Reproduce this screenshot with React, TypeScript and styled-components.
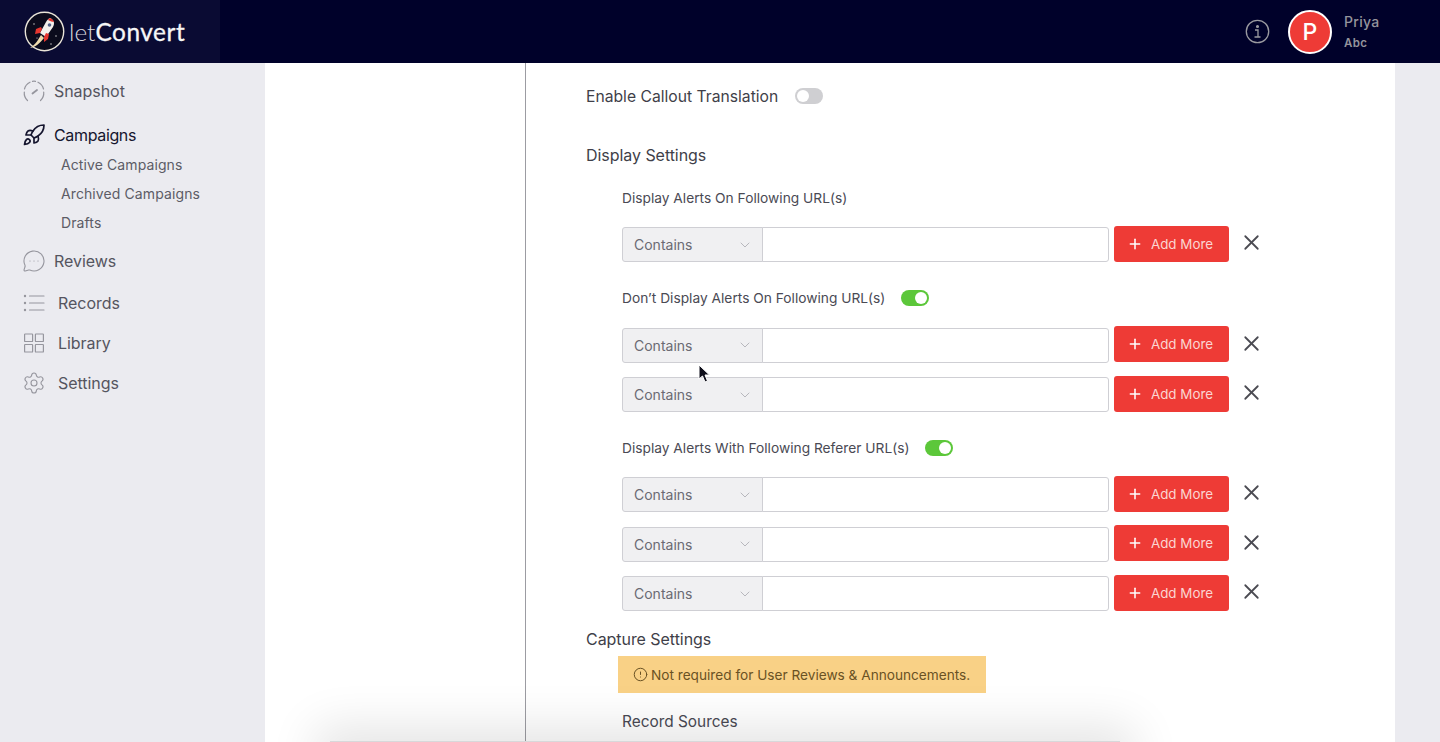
import React from "react";
import styled, { createGlobalStyle } from "styled-components";
import { Rocket, MessageCircleMore, Settings, X, Plus, ChevronDown, CircleAlert } from "lucide-react";

const Global = createGlobalStyle`
  html, body { margin: 0; padding: 0; height: 742px; overflow: hidden; background: #ebebf0; }
  body { font-family: Inter, "Liberation Sans", sans-serif; color: #3f3f49; }
  * { box-sizing: border-box; }
`;

const Page = styled.div`
  position: relative;
  width: 1440px;
  height: 742px;
  overflow: hidden;
  display: flex;
  flex-direction: column;
`;

const Header = styled.header`
  height: 63px;
  flex: none;
  background: #00012a;
  display: flex;
  align-items: center;
  justify-content: space-between;
`;

const Brand = styled.div`
  width: 220px;
  height: 100%;
  background: #0a0b33;
  display: flex;
  align-items: center;
  padding-left: 24px;
  gap: 4px;
`;

const Wordmark = styled.div`
  font-family: Lato, sans-serif;
  font-size: 24.4px;
  color: #d9d9dc;
  font-weight: 300;
  b { font-weight: 400; color: #f6f6f6; letter-spacing: 0.55px; -webkit-text-stroke: 0.3px #f6f6f6; }
`;

const HeaderRight = styled.div`
  display: flex;
  align-items: center;
  padding-right: 60px;
`;

const Avatar = styled.div`
  width: 44px;
  height: 44px;
  margin-left: 18px;
  border-radius: 50%;
  background: #ee3b36;
  border: 2px solid #fff;
  color: #fff;
  font-size: 23px;
  font-weight: 500;
  display: flex;
  align-items: center;
  justify-content: center;
`;

const UserInfo = styled.div`
  margin-left: 12px;
  width: 36px;
  color: #94949c;
  display: flex;
  flex-direction: column;
  gap: 6px;
`;

const UserName = styled.span`
  font-size: 14px;
  line-height: 16px;
  font-weight: 500;
  letter-spacing: 0.3px;
`;

const UserOrg = styled.span`
  font-size: 11.5px;
  line-height: 14px;
  font-weight: 600;
  letter-spacing: 0.4px;
`;

const Body = styled.div`
  flex: 1;
  display: flex;
  min-height: 0;
`;

const Sidebar = styled.nav`
  width: 265px;
  flex: none;
  background: #ebebf0;
  padding: 8px 0 0 24px;
`;

const NavItem = styled.div<{ $top?: number; $textGap?: number; $active?: boolean }>`
  height: 40px;
  margin-top: ${p => p.$top ?? 0}px;
  display: flex;
  align-items: center;
  gap: ${p => p.$textGap ?? 10}px;
  font-size: 16px;
  letter-spacing: ${p => (p.$active ? "-0.35px" : "-0.05px")};
  color: ${p => (p.$active ? "#15152e" : "#55555f")};
  svg {
    width: 24px;
    height: 24px;
    margin: 0 -2px;
    flex: none;
    color: ${p => (p.$active ? "#15152e" : "#96969e")};
  }
`;

const SubList = styled.div`
  margin-top: -5px;
  margin-bottom: 4px;
  padding-left: 37px;
`;

const SubItem = styled.div`
  height: 29px;
  line-height: 29px;
  font-size: 14px;
  color: #5c5c66;
  letter-spacing: 0.1px;
`;

const Main = styled.main`
  width: 1130px;
  flex: none;
  background: #fff;
  padding-left: 260px;
`;

const Column = styled.div`
  height: 100%;
  border-left: 1px solid #9c9ca2;
  padding: 21px 0 0 60px;
`;

const ToggleLine = styled.div`
  display: flex;
  align-items: center;
  gap: 17px;
  height: 24px;
  font-size: 15.7px;
  color: #3f3f49;
`;

const Switch = styled.span<{ $on?: boolean }>`
  width: 28px;
  height: 16px;
  border-radius: 8px;
  background: ${p => (p.$on ? "#5cc73a" : "#cfcfd2")};
  position: relative;
  display: inline-block;
  &::after {
    content: "";
    position: absolute;
    top: 2px;
    left: ${p => (p.$on ? "14px" : "2px")};
    width: 12px;
    height: 12px;
    border-radius: 50%;
    background: #fff;
  }
`;

const SectionTitle = styled.h3<{ $top: number }>`
  margin: ${p => p.$top}px 0 0;
  height: 24px;
  line-height: 24px;
  font-size: 16px;
  font-weight: 400;
  letter-spacing: -0.05px;
  color: #3f3f49;
`;

const Indented = styled.div`
  padding-left: 36px;
`;

const FieldLabel = styled.div<{ $top: number }>`
  margin-top: ${p => p.$top}px;
  height: 24px;
  display: flex;
  align-items: center;
  gap: 16px;
  font-size: 13.75px;
  color: #4a4a54;
`;

const UrlRow = styled.div<{ $top: number }>`
  margin-top: ${p => p.$top}px;
  height: 36px;
  display: flex;
  align-items: flex-start;
`;

const SelectBox = styled.div`
  width: 141px;
  height: 35px;
  flex: none;
  background: #f0f0f2;
  border: 1px solid #cfcfd4;
  border-radius: 3px 0 0 3px;
  display: flex;
  align-items: center;
  justify-content: space-between;
  padding: 0 9px 0 11px;
  font-size: 14px;
  color: #6a6a73;
  svg { width: 16px; height: 16px; color: #a8a8ae; stroke-width: 1.2; }
`;

const UrlInput = styled.div`
  width: 347px;
  height: 35px;
  flex: none;
  margin-left: -1px;
  background: #fff;
  border: 1px solid #cfcfd4;
  border-radius: 0 3px 3px 0;
`;

const AddButton = styled.button`
  width: 115px;
  height: 36px;
  margin: -1.3px 0 0 5px;
  flex: none;
  border: 0;
  border-radius: 3px;
  background: #ee3b36;
  display: flex;
  align-items: center;
  justify-content: center;
  gap: 8px;
  font-family: inherit;
  font-size: 13.4px;
  color: #fbd5d2;
  padding: 0 3px 0 0;
  svg { width: 16px; height: 16px; color: #fff; stroke-width: 2.3; }
`;

const RemoveIcon = styled.span`
  margin: -2.2px 0 0 10px;
  height: 36px;
  display: flex;
  align-items: center;
  color: #4a4a52;
  svg { width: 25px; height: 25px; stroke-width: 1.7; }
`;

const Notice = styled.div`
  margin: 5px 0 0 32px;
  width: 368px;
  height: 37px;
  background: #f9d186;
  display: flex;
  align-items: center;
  gap: 3px;
  padding-left: 15px;
  font-size: 13.65px;
  color: #6a5224;
  svg { width: 15px; height: 15px; flex: none; stroke-width: 1.6; }
`;

const SubTitle = styled.div`
  margin: 17px 0 0 36px;
  height: 24px;
  line-height: 24px;
  font-size: 15.4px;
  color: #4a4a54;
`;

const Gutter = styled.div`
  flex: 1;
  background: #ebebf0;
`;

const BottomCard = styled.div`
  position: absolute;
  left: 330px;
  top: 741px;
  width: 790px;
  height: 30px;
  background: #d8d8da;
  box-shadow: 0 0 48px 14px rgba(0, 0, 0, 0.11);
`;

const Pointer = styled.svg`
  position: absolute;
  left: 698px;
  top: 364px;
  width: 12px;
  height: 19px;
`;

const Logo = () => (
  <svg width="41" height="41" viewBox="0 0 41 41" fill="none">
    <circle cx="20.5" cy="20.5" r="19.2" fill="#0b0b1c" stroke="#e9e4d8" strokeWidth="1.4" />
    <path d="M6 37C12 33 14 29 17 24l3 3c-4 5-8 9-14 10Z" fill="#f0dcae" />
    <path d="M26 7c4 2 5 5 3 9l-7 10-6-4 6-11c1-2 2-3 4-4Z" fill="#f4f1ec" />
    <path d="M26 7c2 1 3.500 2 4 4-1.500 0-4-1-6-2 .5-1 1-1.500 2-2Z" fill="#e6362f" />
    <path d="M17 16l-5 2-1 5 5-1 2-4ZM25 23l-1 5-4 3 0-5 2-4Z" fill="#e6362f" />
    <circle cx="25.500" cy="14" r="1.800" fill="#54648a" />
    <circle cx="10" cy="13" r=".7" fill="#ddd" />
    <circle cx="32" cy="25" r=".7" fill="#ddd" />
    <circle cx="27" cy="33" r=".7" fill="#ddd" />
    <circle cx="13" cy="27" r=".6" fill="#ddd" />
  </svg>
);

const InfoGlyph = () => (
  <svg width="25" height="25" viewBox="0 0 25 25" fill="none" stroke="#9a9aa0" strokeWidth="1.300">
    <circle cx="12.500" cy="12.500" r="11.200" />
    <path d="M10 11h3v7M9.500 18h6" />
    <circle cx="12.500" cy="7.500" r=".9" fill="#9a9aa0" />
  </svg>
);

const SnapshotIcon = () => (
  <svg viewBox="0 0 24 24" fill="none" stroke="currentColor" strokeWidth="1.2" strokeLinecap="round">
    <path d="M5.500 21.500A10.200 10.200 0 0 1 2.300 13M2.500 10A10 10 0 0 1 8 3.200M10.500 2.300a10 10 0 0 1 3 0M16 3.200A10 10 0 0 1 21.500 10M21.700 13a10.200 10.200 0 0 1-3.200 8.500" />
    <path d="M10.500 14.500l4.500-3.500" strokeWidth="1.800" />
  </svg>
);

const RecordsIcon = () => (
  <svg viewBox="0 0 24 24" fill="none" stroke="currentColor" strokeWidth="1.2" strokeLinecap="round">
    <path d="M7.500 5h14.500M7.500 12h14.500M7.500 19h14.500" />
    <path d="M3 5h.01M3 12h.01M3 19h.01" strokeWidth="2.400" />
  </svg>
);

const LibraryIcon = () => (
  <svg viewBox="0 0 24 24" fill="none" stroke="currentColor" strokeWidth="1.2">
    <rect x="2.600" y="3" width="8" height="7.500" rx=".6" />
    <rect x="13.400" y="3" width="8" height="7.500" rx=".6" />
    <rect x="2.600" y="13.500" width="8" height="7.500" rx=".6" />
    <rect x="13.400" y="13.500" width="8" height="7.500" rx=".6" />
  </svg>
);

const Row = ({ top }: { top: number }) => (
  <UrlRow $top={top}>
    <SelectBox>
      Contains
      <ChevronDown />
    </SelectBox>
    <UrlInput />
    <AddButton>
      <Plus />
      Add More
    </AddButton>
    <RemoveIcon>
      <X />
    </RemoveIcon>
  </UrlRow>
);

export default function App() {
  return (
    <Page>
      <Global />
      <Header>
        <Brand>
          <Logo />
          <Wordmark>
            let<b>Convert</b>
          </Wordmark>
        </Brand>
        <HeaderRight>
          <InfoGlyph />
          <Avatar>P</Avatar>
          <UserInfo>
            <UserName>Priya</UserName>
            <UserOrg>Abc</UserOrg>
          </UserInfo>
        </HeaderRight>
      </Header>
      <Body>
        <Sidebar>
          <NavItem><SnapshotIcon />Snapshot</NavItem>
          <NavItem $top={4} $active><Rocket strokeWidth={1.7} />Campaigns</NavItem>
          <SubList>
            <SubItem>Active Campaigns</SubItem>
            <SubItem>Archived Campaigns</SubItem>
            <SubItem>Drafts</SubItem>
          </SubList>
          <NavItem $top={1}><MessageCircleMore strokeWidth={1.1} />Reviews</NavItem>
          <NavItem $top={2} $textGap={14}><RecordsIcon />Records</NavItem>
          <NavItem $textGap={14}><LibraryIcon />Library</NavItem>
          <NavItem $textGap={14}><Settings strokeWidth={1.1} />Settings</NavItem>
        </Sidebar>
        <Main>
          <Column>
            <ToggleLine>
              Enable Callout Translation
              <Switch />
            </ToggleLine>
            <SectionTitle $top={35}>Display Settings</SectionTitle>
            <Indented>
              <FieldLabel $top={18.5}>Display Alerts On Following URL(s)</FieldLabel>
              <Row top={17.5} />
              <FieldLabel $top={23}>
                Don’t Display Alerts On Following URL(s)
                <Switch $on />
              </FieldLabel>
              <Row top={17.5} />
              <Row top={13.5} />
              <FieldLabel $top={22.5}>
                Display Alerts With Following Referer URL(s)
                <Switch $on />
              </FieldLabel>
              <Row top={17.5} />
              <Row top={13.5} />
              <Row top={13.5} />
            </Indented>
            <SectionTitle $top={15}>Capture Settings</SectionTitle>
            <Notice>
              <CircleAlert />
              Not required for User Reviews &amp; Announcements.
            </Notice>
            <SubTitle>Record Sources</SubTitle>
          </Column>
        </Main>
        <Gutter />
      </Body>
      <BottomCard />
      <Pointer viewBox="0 0 12 19">
        <path d="M1 1v14l3.500-3 2.500 6 2.500-1-2.500-6h4.500Z" fill="#10101c" stroke="#fff" strokeWidth="1" />
      </Pointer>
    </Page>
  );
}
